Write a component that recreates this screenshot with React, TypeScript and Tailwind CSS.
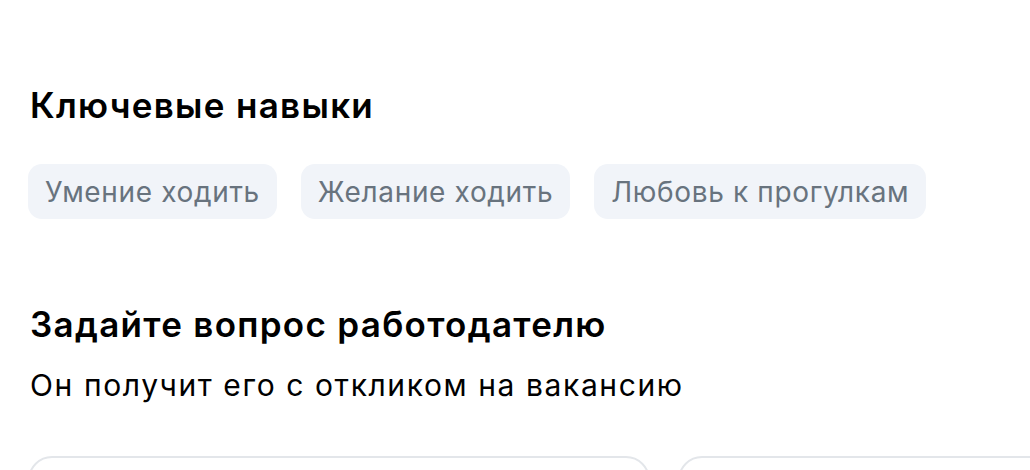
import React from 'react';

const SKILLS = ['Умение ходить', 'Желание ходить', 'Любовь к прогулкам'];

export default function App() {
  return (
    <div className="h-[470px] w-[1030px] overflow-hidden bg-white font-['Inter',sans-serif]">
      <div className="pt-[85px] pl-[30px]">
        <h2 className="text-[35px] leading-[40px] font-semibold text-black tracking-[1.3px]">
          Ключевые навыки
        </h2>
      </div>
      <div className="mt-[39px] flex gap-6 pl-[28px]">
        {SKILLS.map((skill) => (
          <span
            key={skill}
            className="flex h-[55px] items-center rounded-[14px] bg-[#f1f4f9] px-[17px] text-[28px] tracking-[0.65px] text-[#68737e]"
          >
            {skill}
          </span>
        ))}
      </div>
      <div className="mt-[85px] pl-[30px]">
        <h2 className="text-[35px] leading-[40px] font-semibold text-black tracking-[1.3px]">
          Задайте вопрос работодателю
        </h2>
        <p className="mt-[23px] text-[30px] leading-[36px] tracking-[1.6px] text-black">
          Он получит его с откликом на вакансию
        </p>
      </div>
      <div className="mt-[53px] flex gap-7 pl-[28px]">
        <div className="h-[80px] w-[622px] shrink-0 rounded-[24px] border-2 border-[#e3e6ea]" />
        <div className="h-[80px] w-[500px] shrink-0 rounded-[24px] border-2 border-[#e3e6ea]" />
      </div>
    </div>
  );
}
